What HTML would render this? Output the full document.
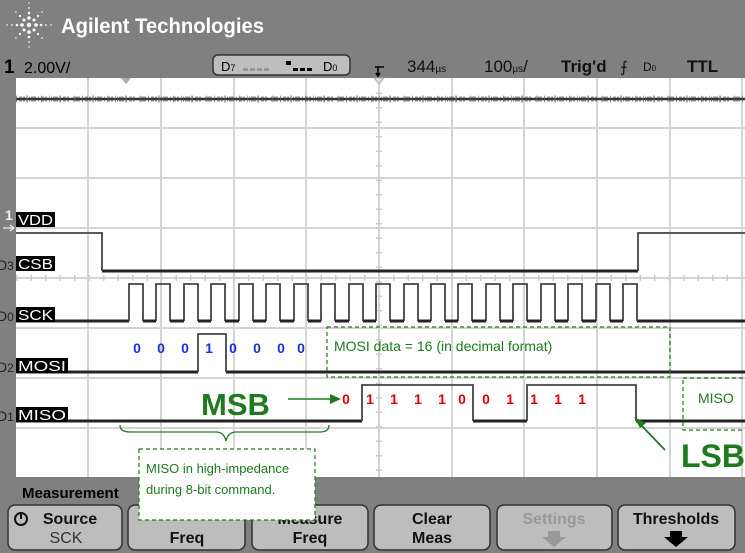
<!DOCTYPE html>
<html><head><meta charset="utf-8"><style>
html,body{margin:0;padding:0;background:#808080;}
svg{display:block;}
text{font-family:"Liberation Sans",sans-serif;}
</style></head><body>
<svg width="745" height="553" viewBox="0 0 745 553" xmlns="http://www.w3.org/2000/svg">
<rect width="745" height="553" fill="#808080"/>
<g fill="#fff">
<circle cx="29" cy="25" r="2.2"/>
<circle cx="29" cy="18" r="1.8"/><circle cx="29" cy="13" r="1.3"/><circle cx="29" cy="8" r="0.9"/><circle cx="29" cy="3" r="0.7"/>
<circle cx="29" cy="32" r="1.8"/><circle cx="29" cy="37" r="1.3"/><circle cx="29" cy="42" r="0.9"/><circle cx="29" cy="47" r="0.7"/>
<circle cx="22" cy="25" r="1.8"/><circle cx="17" cy="25" r="1.3"/><circle cx="12" cy="25" r="0.9"/><circle cx="7" cy="25" r="0.7"/>
<circle cx="36" cy="25" r="1.8"/><circle cx="41" cy="25" r="1.3"/><circle cx="46" cy="25" r="0.9"/><circle cx="51" cy="25" r="0.7"/>
<circle cx="24" cy="20" r="1.5"/><circle cx="20" cy="16" r="1.1"/><circle cx="16" cy="12" r="0.8"/>
<circle cx="34" cy="20" r="1.5"/><circle cx="38" cy="16" r="1.1"/><circle cx="42" cy="12" r="0.8"/>
<circle cx="24" cy="30" r="1.5"/><circle cx="20" cy="34" r="1.1"/><circle cx="16" cy="38" r="0.8"/>
<circle cx="34" cy="30" r="1.5"/><circle cx="38" cy="34" r="1.1"/><circle cx="42" cy="38" r="0.8"/>
</g>
<text x="61" y="33" font-size="21" font-weight="bold" fill="#fff" textLength="203" lengthAdjust="spacingAndGlyphs">Agilent Technologies</text>
<text x="4" y="73" font-size="19" font-weight="bold" fill="#000">1</text>
<text x="24" y="73" font-size="16" fill="#000">2.00V/</text>
<rect x="213" y="55" width="137" height="20" rx="5" fill="#bdbdbd" stroke="#333" stroke-width="1.5"/>
<text x="221" y="71" font-size="13" fill="#000">D<tspan font-size="9">7</tspan></text>
<g fill="#999"><rect x="243" y="68" width="5" height="3"/><rect x="250" y="68" width="5" height="3"/><rect x="257" y="68" width="5" height="3"/><rect x="264" y="68" width="5" height="3"/></g>
<g fill="#000"><rect x="286" y="61" width="5" height="4"/><rect x="293" y="68" width="5" height="3"/><rect x="300" y="68" width="5" height="3"/><rect x="307" y="68" width="5" height="3"/></g>
<text x="323" y="71" font-size="13" fill="#000">D<tspan font-size="9">0</tspan></text>
<path d="M375 67 H384 M378 67 V76 M376 73 L378 76 L380 73" stroke="#000" stroke-width="1.6" fill="none"/>
<text x="407" y="72" font-size="17" fill="#111">344<tspan font-size="10">µs</tspan></text>
<text x="484" y="72" font-size="17" fill="#111">100<tspan font-size="10">µs</tspan>/</text>
<text x="561" y="72" font-size="17" font-weight="bold" fill="#111">Trig'd</text>
<text x="620" y="72" font-size="15" fill="#111">⨍</text>
<text x="643" y="71" font-size="12" fill="#111">D<tspan font-size="8">0</tspan></text>
<text x="687" y="72" font-size="17" font-weight="bold" fill="#111">TTL</text>
<rect x="16" y="78" width="729" height="399" fill="#fff"/>
<g stroke="#d4d4d4" stroke-width="2">
<path d="M88 78V477M161 78V477M234 78V477M306 78V477M379 78V477M452 78V477M524 78V477M597 78V477M670 78V477M742 78V477"/>
<path d="M16 128H745M16 178H745M16 228H745M16 278H745M16 328H745M16 378H745M16 428H745"/>
</g>
<path d="M16 278H745" stroke="#ccc" stroke-width="6" stroke-dasharray="1.5 13"/>
<path d="M379 78V477" stroke="#ccc" stroke-width="6" stroke-dasharray="1.5 13"/>
<path d="M121 78 L131 78 L126 84 Z" fill="#aaa"/>
<path d="M374 78 L384 78 L379 84 Z" fill="#ddd" stroke="#aaa"/>
<path d="M16 99 H745" stroke="#333" stroke-width="2.5"/>
<path d="M16 99 H745" stroke="#444" stroke-width="5" stroke-dasharray="1 2 3 1 2 4 1 1 5 2" opacity="0.55"/>
<path d="M16 99 H745" stroke="#666" stroke-width="7" stroke-dasharray="1 9 2 13 1 7" opacity="0.5"/>
<g fill="none" stroke="#222" stroke-width="3">
<path d="M102 271 H638"/>
<path d="M16 321 H129 M637 321 H745"/>
<path d="M16 372 H198 M226 372 H745"/>
<path d="M16 421 H362 M473 421 H527 M636 421 H745"/>
</g>
<g fill="none" stroke="#444" stroke-width="1.8">
<path d="M16 233 H102 V271 M638 271 V233 H745"/>
<path d="M129 321 V284 H143 V321 M156 321 V284 H170 V321 M184 321 V284 H198 V321 M211 321 V284 H225 V321 M239 321 V284 H253 V321 M266 321 V284 H280 V321 M294 321 V284 H308 V321 M321 321 V284 H335 V321 M349 321 V284 H363 V321 M376 321 V284 H390 V321 M404 321 V284 H418 V321 M431 321 V284 H445 V321 M458 321 V284 H472 V321 M486 321 V284 H500 V321 M513 321 V284 H527 V321 M541 321 V284 H555 V321 M568 321 V284 H582 V321 M596 321 V284 H610 V321 M623 321 V284 H637 V321"/>
<path d="M198 372 V334 H226 V372"/>
<path d="M362 421 V385 H473 V421 M527 421 V385 H636 V421"/>
</g>
<g stroke="#222" stroke-width="3"><path d="M143 321H156M170 321H184M198 321H211M225 321H239M253 321H266M280 321H294M308 321H321M335 321H349M363 321H376M390 321H404M418 321H431M445 321H458M472 321H486M500 321H513M527 321H541M555 321H568M582 321H596M610 321H623"/></g>
<g font-size="15" fill="#fff">
<rect x="16" y="212" width="39" height="15" fill="#000"/><text x="18" y="225" textLength="35" lengthAdjust="spacingAndGlyphs">VDD</text>
<rect x="16" y="256" width="39" height="15" fill="#000"/><text x="18" y="269" textLength="35" lengthAdjust="spacingAndGlyphs">CSB</text>
<rect x="16" y="307" width="39" height="15" fill="#000"/><text x="18" y="320" textLength="35" lengthAdjust="spacingAndGlyphs">SCK</text>
<rect x="16" y="358" width="52" height="15" fill="#000"/><text x="18" y="371" textLength="48" lengthAdjust="spacingAndGlyphs">MOSI</text>
<rect x="16" y="407" width="52" height="15" fill="#000"/><text x="18" y="420" textLength="48" lengthAdjust="spacingAndGlyphs">MISO</text>
</g>
<g font-size="14" fill="#222">
<text x="5" y="220" fill="#eee" font-weight="bold">1</text>
<path d="M3 228 H14 M10 225 L14 228 L10 231" stroke="#eee" stroke-width="1.2" fill="none"/>
<text x="-3" y="270">D<tspan font-size="12">3</tspan></text>
<text x="-3" y="321">D<tspan font-size="12">0</tspan></text>
<text x="-3" y="372">D<tspan font-size="12">2</tspan></text>
<text x="-3" y="421">D<tspan font-size="12">1</tspan></text>
</g>
<g font-size="14" font-weight="bold" fill="#1a30d0" text-anchor="middle">
<text x="137" y="353">0</text><text x="161" y="353">0</text><text x="185" y="353">0</text><text x="209" y="353">1</text><text x="233" y="353">0</text><text x="257" y="353">0</text><text x="281" y="353">0</text><text x="301" y="353">0</text>
</g>
<g font-size="14" font-weight="bold" fill="#e00000" text-anchor="middle">
<text x="346" y="404">0</text><text x="370" y="404">1</text><text x="394" y="404">1</text><text x="418" y="404">1</text><text x="442" y="404">1</text><text x="462" y="404">0</text><text x="486" y="404">0</text><text x="510" y="404">1</text><text x="534" y="404">1</text><text x="558" y="404">1</text><text x="582" y="404">1</text>
</g>
<g fill="none" stroke="#1e7a1e" stroke-width="1.2" stroke-dasharray="4 3">
<rect x="327" y="327" width="343" height="50"/>
<rect x="683" y="378" width="70" height="52"/>
</g>
<text x="334" y="351" font-size="14" fill="#1e7a1e">MOSI data = 16 (in decimal format)</text>
<text x="698" y="403" font-size="14" fill="#1e7a1e">MISO</text>
<text x="201" y="415" font-size="31" font-weight="bold" fill="#1e7a1e">MSB</text>
<text x="681" y="467" font-size="32" font-weight="bold" fill="#1e7a1e">LSB</text>
<path d="M288 399 H332" stroke="#1e7a1e" stroke-width="1.5"/>
<path d="M330 394 L341 399 L330 404 Z" fill="#1e7a1e"/>
<path d="M665 450 L640 424" stroke="#1e7a1e" stroke-width="1.8"/>
<path d="M634 417 L646 423 L640 428 Z" fill="#1e7a1e"/>
<path d="M120 425 Q120 432 130 432 H216 Q224 432 226 441 Q228 432 236 432 H320 Q329 432 329 425" fill="none" stroke="#1e7a1e" stroke-width="1.3"/>
<text x="22" y="498" font-size="15" font-weight="bold" fill="#000">Measurement</text>
<g stroke="#333" stroke-width="1.5" fill="#bdbdbd">
<rect x="8" y="505" width="114" height="45" rx="7"/>
<rect x="128" y="505" width="117" height="45" rx="7"/>
<rect x="252" y="505" width="116" height="45" rx="7"/>
<rect x="374" y="505" width="116" height="45" rx="7"/>
<rect x="497" y="505" width="115" height="45" rx="7"/>
<rect x="618" y="505" width="117" height="45" rx="7"/>
</g>
<g font-size="16" font-weight="bold" fill="#111" text-anchor="middle">
<text x="70" y="524">Source</text><text x="66" y="543" font-weight="normal" fill="#333">SCK</text>
<text x="187" y="543">Freq</text>
<text x="310" y="524">Measure</text><text x="310" y="543">Freq</text>
<text x="432" y="524">Clear</text><text x="432" y="543">Meas</text>
<text x="554" y="524" fill="#999">Settings</text>
<text x="676" y="524">Thresholds</text>
</g>
<circle cx="21" cy="519" r="6" fill="none" stroke="#111" stroke-width="2"/>
<path d="M21 512 V519" stroke="#111" stroke-width="2"/>
<path d="M548 531 H560 V537 H566 L554 547 L542 537 H548 Z" fill="#999"/>
<path d="M670 531 H682 V537 H688 L676 547 L664 537 H670 Z" fill="#000"/>
<rect x="139" y="449" width="176" height="71" fill="#fff" stroke="#1e7a1e" stroke-width="1.2" stroke-dasharray="4 3"/>
<text x="146" y="473" font-size="13" fill="#1e7a1e">MISO in high-impedance</text>
<text x="146" y="494" font-size="13" fill="#1e7a1e">during 8-bit command.</text>
</svg>
</body></html>
